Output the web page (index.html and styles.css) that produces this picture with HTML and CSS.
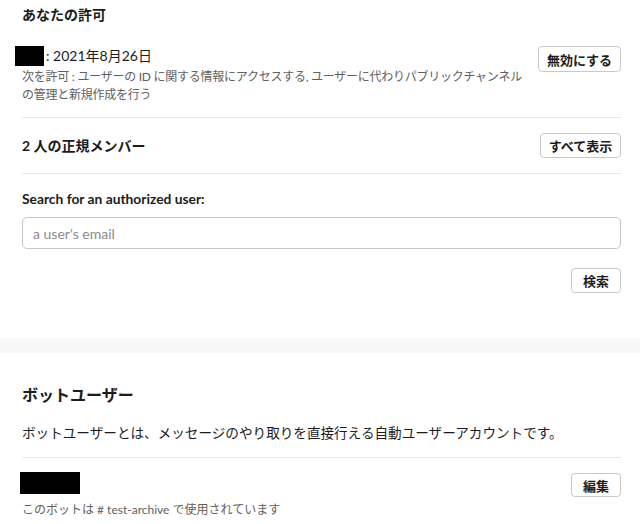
FILE: index.html
```html
<!DOCTYPE html>
<html lang="ja">
<head>
<meta charset="utf-8">
<link rel="stylesheet" href="styles.css">
</head>
<body>
<div class="section">
  <h2 class="title">あなたの許可</h2>
  <div class="perm-row">
    <div class="perm-info">
      <div class="date-line"><span class="redact redact-small"></span>: 2021年8月26日</div>
      <p class="desc">次を許可 : ユーザーの ID に関する情報にアクセスする, ユーザーに代わりパブリックチャンネルの管理と新規作成を行う</p>
    </div>
    <button class="btn btn-wide">無効にする</button>
  </div>
  <hr class="divider">
  <div class="members-row">
    <span class="members-title">2 人の正規メンバー</span>
    <button class="btn btn-wide2">すべて表示</button>
  </div>
  <hr class="divider">
  <label class="search-label" for="email">Search for an authorized user:</label>
  <input class="search-input" id="email" type="text" placeholder="a user's email">
  <div class="search-actions">
    <button class="btn btn-small">検索</button>
  </div>
</div>
<div class="band"></div>
<div class="section">
  <h2 class="bot-title">ボットユーザー</h2>
  <p class="bot-desc">ボットユーザーとは、メッセージのやり取りを直接行える自動ユーザーアカウントです。</p>
  <hr class="divider divider-bot">
  <div class="bot-row">
    <div class="bot-info">
      <span class="redact redact-large"></span>
      <p class="bot-note">このボットは # test-archive で使用されています</p>
    </div>
    <button class="btn btn-small btn-edit">編集</button>
  </div>
</div>
</body>
</html>
```
FILE: styles.css
```css
* { box-sizing: border-box; }
body {
  margin: 0;
  background: #ffffff;
  color: #1d1c1d;
  font-family: Lato, "Noto Sans CJK JP", sans-serif;
}
.section {
  padding: 0 19px 0 22px;
}
.title {
  margin: 0;
  padding-top: 5px;
  font-size: 14px;
  line-height: 20px;
  font-weight: 700;
}
.perm-row {
  margin-top: 21px;
  display: flex;
  justify-content: space-between;
  align-items: flex-start;
}
.perm-info {
  flex: 1;
  margin-right: 10px;
}
.date-line {
  font-size: 14px;
  line-height: 20px;
  height: 20px;
}
.redact {
  display: inline-block;
  background: #000;
  vertical-align: top;
}
.redact-small {
  width: 29px;
  height: 20px;
  margin-left: -7px;
  margin-right: 2px;
}
.desc {
  margin: 2px 0 0;
  font-size: 12px;
  line-height: 18px;
  letter-spacing: -0.25px;
  color: #616061;
}
.btn {
  background: #fff;
  border: 1px solid #c9c9c9;
  border-radius: 4px;
  font-family: Lato, "Noto Sans CJK JP", sans-serif;
  font-size: 13px;
  font-weight: 700;
  color: #1d1c1d;
  height: 26px;
  padding: 0;
  flex-shrink: 0;
}
.btn-wide { width: 83px; }
.btn-wide2 { width: 81px; height: 25px; }
.btn-small { width: 50px; height: 25px; }
.divider {
  margin: 13px 0 0;
  border: 0;
  border-top: 1px solid #e8e8e8;
  height: 0;
}
.members-row {
  display: flex;
  justify-content: space-between;
  align-items: center;
  padding: 15px 0;
}
.members-row + .divider { margin-top: 0; }
.members-title {
  font-size: 14px;
  font-weight: 700;
  line-height: 20px;
}
.search-label {
  display: block;
  margin-top: 16px;
  font-size: 13.8px;
  font-weight: 700;
  line-height: 18px;
}
.search-input {
  display: block;
  width: 100%;
  margin-top: 9px;
  height: 32px;
  border: 1px solid #c6c6c6;
  border-radius: 5px;
  padding: 0 10px;
  font-family: Lato, "Noto Sans CJK JP", sans-serif;
  font-size: 14px;
  color: #1d1c1d;
  outline: none;
}
.search-input::placeholder { color: #8b8b8b; }
.search-actions {
  display: flex;
  justify-content: flex-end;
  margin-top: 19px;
}
.band {
  margin-top: 45px;
  height: 15px;
  background: #f7f7f7;
}
.bot-title {
  margin: 31px 0 0;
  font-size: 16px;
  line-height: 22px;
  font-weight: 700;
}
.bot-desc {
  margin: 17px 0 0;
  font-size: 13.6px;
  line-height: 20px;
}
.divider-bot { margin-top: 14px; }
.bot-row {
  display: flex;
  justify-content: space-between;
  align-items: flex-start;
  margin-top: 14px;
}
.redact-large {
  width: 60px;
  height: 22px;
  margin-left: -2px;
}
.bot-note {
  margin: 8px 0 0;
  font-size: 12px;
  line-height: 16px;
  color: #616061;
}
.btn-edit { margin-top: 1px; height: 24px; }
```
